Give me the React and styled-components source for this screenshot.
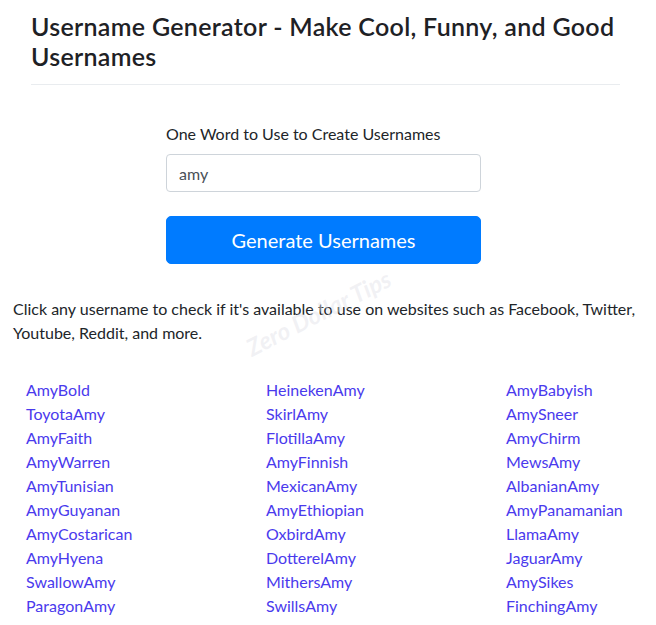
import React from 'react';
import styled, { createGlobalStyle } from 'styled-components';

const GlobalStyle = createGlobalStyle`
    body {
        margin: 0;
        background: #fff;
        font-family: 'Segoe UI', Lato, 'Liberation Sans', sans-serif;
        font-size: 16px;
        line-height: 1.5;
        color: #212529;
    }
    * {
        box-sizing: border-box;
    }
`;

const names = [
    ['AmyBold', 'HeinekenAmy', 'AmyBabyish'],
    ['ToyotaAmy', 'SkirlAmy', 'AmySneer'],
    ['AmyFaith', 'FlotillaAmy', 'AmyChirm'],
    ['AmyWarren', 'AmyFinnish', 'MewsAmy'],
    ['AmyTunisian', 'MexicanAmy', 'AlbanianAmy'],
    ['AmyGuyanan', 'AmyEthiopian', 'AmyPanamanian'],
    ['AmyCostarican', 'OxbirdAmy', 'LlamaAmy'],
    ['AmyHyena', 'DotterelAmy', 'JaguarAmy'],
    ['SwallowAmy', 'MithersAmy', 'AmySikes'],
    ['ParagonAmy', 'SwillsAmy', 'FinchingAmy'],
];

const App = () => {
    return (
        <Page>
            <GlobalStyle />
            <Header>
                <Title>Username Generator - Make Cool, Funny, and Good Usernames</Title>
            </Header>
            <Form onSubmit={(e) => e.preventDefault()}>
                <Label htmlFor="word">One Word to Use to Create Usernames</Label>
                <Input id="word" defaultValue="amy" />
                <GenerateButton type="submit">Generate Usernames</GenerateButton>
            </Form>
            <Intro>
                Click any username to check if it's available to use on websites such as Facebook, Twitter, Youtube,
                Reddit, and more.
                <Watermark>Zero Dollar Tips</Watermark>
            </Intro>
            <NameGrid>
                {names.flat().map((name) => (
                    <NameLink href="#" key={name}>
                        {name}
                    </NameLink>
                ))}
            </NameGrid>
        </Page>
    );
};

export default App;

const Page = styled.div`
    padding-top: 11px;
    overflow: hidden;
`;

const Header = styled.div`
    margin: 0 36px 0 31px;
    padding-bottom: 13px;
    border-bottom: 1px solid #e9ecef;
`;

const Title = styled.h3`
    margin: 0;
    font-size: 25px;
    font-weight: 600;
    line-height: 30px;
    letter-spacing: 0.3px;
    color: #1e2125;
`;

const Form = styled.form`
    width: 315px;
    margin: 37px 0 0 166px;
    display: flex;
    flex-direction: column;
`;

const Label = styled.label`
    margin-bottom: 8px;
    line-height: 24px;
`;

const Input = styled.input`
    height: 38px;
    padding: 6px 12px;
    font: inherit;
    color: #495057;
    border: 1px solid #ced4da;
    border-radius: 4px;
    outline: none;
`;

const GenerateButton = styled.button`
    margin-top: 24px;
    height: 48px;
    font: inherit;
    font-size: 20px;
    color: #fff;
    background: #007bff;
    border: 1px solid #007bff;
    border-radius: 5px;
    cursor: pointer;
`;

const Intro = styled.p`
    position: relative;
    margin: 33px 0 0 13px;
    padding-right: 10px;
`;

const Watermark = styled.span`
    position: absolute;
    left: 243px;
    top: 32px;
    transform: rotate(-27deg);
    transform-origin: left bottom;
    font-size: 24px;
    font-style: italic;
    font-weight: 700;
    color: rgba(225, 225, 232, 0.45);
    pointer-events: none;
    white-space: nowrap;
`;

const NameGrid = styled.div`
    margin: 33px 0 0 26px;
    display: grid;
    grid-template-columns: 240px 240px 1fr;
`;

const NameLink = styled.a`
    color: #4a3aed;
    text-decoration: none;
    line-height: 24px;
`;
